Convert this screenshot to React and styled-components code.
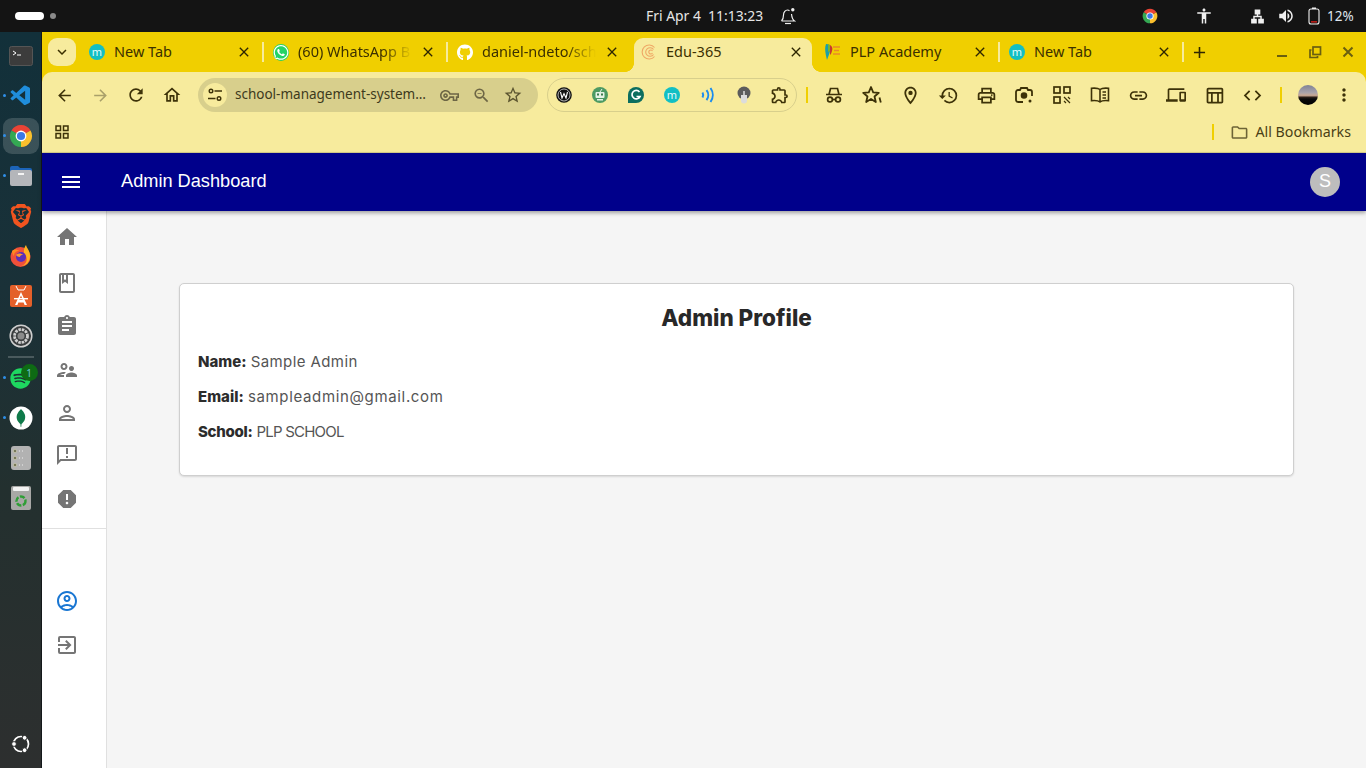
import React from 'react';
import styled, { createGlobalStyle } from 'styled-components';
import {
  MdHome, MdOutlineBook, MdAssignment, MdOutlineSupervisorAccount, MdOutlinePerson, MdOutlineAnnouncement, MdReport,
  MdOutlineAccountCircle, MdOutlineExitToApp, MdMenu, MdArrowBack, MdArrowForward, MdRefresh, MdOutlineHome, MdOutlineVpnKey,
  MdZoomOut, MdStarBorder, MdOutlineExtension, MdOutlineLocationOn, MdHistory, MdOutlinePrint,
  MdLink, MdOutlineDevices, MdOutlineTableChart, MdCode, MdMoreVert, MdAccessibility, MdLan, MdVolumeUp, MdClose, MdAdd,
  MdKeyboardArrowDown, MdOutlineGridView, MdOutlineFolder,
} from 'react-icons/md';
import { FaWhatsapp, FaGithub, FaSpotify } from 'react-icons/fa';
import { VscVscode } from 'react-icons/vsc';
import { SiBrave } from 'react-icons/si';

const Global = createGlobalStyle`
  html, body { margin: 0; padding: 0; overflow: hidden; background: #f5f5f5; }
  * { box-sizing: border-box; }
`;

const Screen = styled.div`
  width: 1366px; height: 768px; display: flex; flex-direction: column;
  font-family: "Noto Sans", sans-serif; overflow: hidden;
`;

/* ---- system top bar ---- */
const TopBar = styled.header`
  height: 32px; flex: none; background: #141414; color: #e6e6e6; display: flex; align-items: center; font-size: 14px;
`;
const Pill = styled.span`
  width: 29px; height: 8px; border-radius: 4px; background: #fff; margin-left: 15px;
`;
const Dot = styled.span`
  width: 6px; height: 6px; border-radius: 50%; background: #8a8a8a; margin-left: 6px;
`;
const Clock = styled.span`
  margin: -2px 0 0 590px; width: 122px; white-space: pre; font-size: 13.9px;
`;
const TrayItem = styled.span`
  display: flex; align-items: center; justify-content: center; flex: none; color: #f0f0f0;
  margin-left: ${p => p.$ml}px;
  width: ${p => p.$w || 20}px;
`;
const Percent = styled.span`
  margin: -1px 0 0 3px; flex: none; font-size: 13.5px; color: #dfe6ee;
`;

/* ---- body ---- */
const Desktop = styled.div`
  flex: 1; display: flex; min-height: 0;
`;
const Dock = styled.nav`
  width: 42px; flex: none; display: flex; flex-direction: column; align-items: center; padding: 4px 0;
  background: linear-gradient(180deg, #12303a 0%, #1a3138 35%, #23302f 62%, #2d2f2f 100%);
  border-right: 1px solid #14181a;
`;
const DockItem = styled.div`
  position: relative; width: 36px; height: 40px; flex: none; display: flex; align-items: center; justify-content: center;
  ${p => p.$active && `
    &::before { content: ''; position: absolute; inset: 2px 0; background: rgba(255,255,255,.16); border-radius: 9px; }
  `}
  ${p => p.$running && `
    &::after { content: ''; position: absolute; left: 0; top: 18px; width: 3px; height: 3px; border-radius: 50%; background: #2f8fe8; }
  `}
  & > svg { position: relative; }
`;
const DockSep = styled.div`
  width: 26px; height: 2px; flex: none; background: rgba(255,255,255,.2);
`;
const DockBottom = styled(DockItem)`
  margin-top: auto;
`;
const DockBadge = styled.span`
  position: absolute; top: 6px; left: 18px; width: 17px; height: 17px; border-radius: 50%; background: #0e6b14;
  color: #6fc4d8; font-size: 10px; display: flex; align-items: center; justify-content: center;
`;

const Window = styled.div`
  flex: 1; min-width: 0; display: flex; flex-direction: column; background: #f0cf00;
`;

/* ---- tabs ---- */
const TabStrip = styled.div`
  height: 40px; flex: none; display: flex; align-items: flex-end; padding-left: 6px; color: #3b3000;
`;
const TabMenu = styled.button`
  width: 28px; height: 28px; margin: 0 3px 6px 0; border: 0; padding: 0; border-radius: 9px; background: #f7eb9d; color: #3b3000;
  display: flex; align-items: center; justify-content: center; flex: none;
`;
const Tab = styled.div`
  position: relative; width: 184px; height: 34px; flex: none; display: flex; align-items: center; padding: 0 0 6px 10px;
  ${p => p.$active ? `
    background: #f7eb9d; margin: 0 3px; width: 178px; padding-left: 7px; border-radius: 9px 9px 0 0;
    &::before, &::after { content: ''; position: absolute; bottom: 0; width: 9px; height: 9px; background: radial-gradient(circle at var(--c) 0, #f0cf00 8.6px, #f7eb9d 9.2px); }
    &::before { left: -9px; --c: 0; }
    &::after { right: -9px; --c: 100%; }
  ` : ''}
  ${p => p.$sep ? `
    &::after { content: ''; position: absolute; right: -1px; top: 4px; width: 2px; height: 20px; background: #f7eb9d; }
  ` : ''}
`;
const Favicon = styled.span`
  width: 16px; height: 16px; flex: none; display: flex; align-items: center; justify-content: center;
`;
const MercuryDot = styled.span`
  width: 16px; height: 16px; border-radius: 50%; background: #12bfc4; color: #e8fbfb; flex: none;
  font-size: 11px; line-height: 1; display: flex; align-items: center; justify-content: center; padding-bottom: 1px;
`;
const TabTitle = styled.span`
  margin: -2px 0 0 9px; width: 121px; font-size: 14.5px; white-space: nowrap; overflow: hidden; flex: none;
  ${p => p.$fade ? `-webkit-mask-image: linear-gradient(90deg, #000 84px, transparent 114px); mask-image: linear-gradient(90deg, #000 84px, transparent 114px);` : ''}
`;
const TabClose = styled.span`
  display: flex; flex: none; margin-left: 1px; color: #2e2600;
`;
const NewTabBtn = styled.span`
  width: 32px; height: 34px; padding-bottom: 6px; display: flex; align-items: center; justify-content: center; color: #2e2600; flex: none;
`;
const WinControls = styled.div`
  margin-left: auto; display: flex; height: 34px; padding: 0 2px 6px 0; align-items: center;
`;
const WinBtn = styled.span`
  width: 33px; display: flex; align-items: center; justify-content: center;
`;

/* ---- toolbar ---- */
const Toolbar = styled.div`
  height: 44px; flex: none; background: #f7eb9d; border-radius: 10px 10px 0 0; display: flex; align-items: center; padding: 2px 0 0 4px;
`;
const Tool = styled.span`
  width: ${p => p.$w || 36}px; flex: none; display: flex; align-items: center; justify-content: center;
  color: ${p => p.$tone || '#3d3208'};
`;
const Omnibox = styled.div`
  width: 340px; height: 34px; margin-left: 8px; flex: none; background: #d8cf8c; border-radius: 17px; display: flex; align-items: center; padding-left: 5px;
`;
const SiteInfo = styled.span`
  width: 24px; height: 24px; border-radius: 50%; background: #f7eb9d; flex: none; display: flex; align-items: center; justify-content: center;
`;
const Url = styled.span`
  margin: -2px 0 0 8px; width: 198px; flex: none; font-size: 13.5px; color: #3d3a1c; white-space: nowrap;
`;
const ExtPill = styled.div`
  width: 250px; height: 34px; margin-left: 9px; flex: none; border: 1px solid #d8cf8c; border-radius: 17px; display: flex; align-items: center; justify-content: center;
`;
const ToolSep = styled.span`
  width: 2px; height: 16px; flex: none; background: #f0cf00; margin: 0 ${p => p.$mr}px 0 ${p => p.$ml}px;
`;
const Avatar = styled.span`
  width: 20px; height: 20px; margin-left: 16px; border-radius: 50%; flex: none;
  background: linear-gradient(180deg, #7f8296 0%, #a9a3aa 38%, #c9a894 52%, #2a1e18 62%, #0a0a0a 70%, #000 100%);
`;
const MoreSlot = styled(Tool)`
  margin-left: 14px;
`;
const Bookmarks = styled.div`
  height: 37px; flex: none; background: #f7eb9d; border-bottom: 1px solid #d8cf8c; display: flex; align-items: center; padding: 0 0 4px 11px; color: #3d3208;
`;
const BookmarkEnd = styled.div`
  margin-left: auto; display: flex; align-items: center; padding-right: 15px; font-size: 14.2px; color: #4a4015;
`;
const BookSep = styled.span`
  width: 2px; height: 16px; background: #f0cf00; margin-right: 16px;
`;
const FolderIcon = styled.span`
  display: flex; color: #6d6436; margin-right: 7px;
`;
const BookLabel = styled.span`
  margin-top: -2px;
`;

/* ---- web page ---- */
const AppBar = styled.header`
  height: 58px; flex: none; background: #00008b; color: #fff; display: flex; align-items: center; padding: 0 26px 1px 17px;
  box-shadow: 0 2px 4px rgba(0,0,0,.35); position: relative; z-index: 1;
`;
const MenuBtn = styled.span`
  display: flex; width: 24px;
`;
const AppTitle = styled.h1`
  margin: 0 0 0 38px; font: 400 18.2px "Liberation Sans", Arial, sans-serif;
`;
const UserBadge = styled.span`
  margin-left: auto; width: 30px; height: 30px; border-radius: 50%; background: #bdbdbd; color: #fff; font: 400 18px "Liberation Sans", Arial, sans-serif;
  display: flex; align-items: center; justify-content: center;
`;
const PageBody = styled.div`
  flex: 1; min-height: 0; display: flex; background: #f5f5f5;
`;
const Sidebar = styled.aside`
  width: 65px; flex: none; background: #fff; border-right: 1px solid #e0e0e0; color: #757575; padding-top: 6px;
`;
const SideItem = styled.div`
  height: 40px; margin-top: ${p => p.$gap || 0}px; display: flex; align-items: center; padding-left: 13px;
  color: ${p => p.$active ? '#1976d2' : 'inherit'};
`;
const SideDivider = styled.hr`
  margin: 9px 0 52px; border: 0; border-top: 1px solid #e0e0e0;
`;
const Main = styled.main`
  flex: 1; min-width: 0; padding: 72px 0 0 72px;
`;
const Card = styled.section`
  width: 1115px; height: 193px; background: #fff; border: 1px solid #cfcfcf; border-radius: 5px;
  box-shadow: 0 1px 2px rgba(0,0,0,.12); padding: 17px 18px 0;
`;
const CardTitle = styled.h2`
  margin: 0 0 17px; font: 800 22.5px/34px Inter, sans-serif; color: #282828; text-align: center;
`;
const Field = styled.p`
  margin: 0 0 15px; height: 20px; font: 400 15px/20px Inter, sans-serif; color: #555;
`;
const Label = styled.strong`
  color: #2c2c2c; font-weight: 800; letter-spacing: ${p => p.$ls || 0}px;
`;
const Value = styled.span`
  letter-spacing: ${p => p.$ls || 0}px;
`;

/* ---- drawings ---- */
const ChromeLogo = ({ s = 24 }) => (
  <svg width={s} height={s} viewBox="0 0 24 24">
    <path d="M12 12 2.47 6.5A11 11 0 0 1 21.53 6.5Z" fill="#ea4335" />
    <path d="M12 12 21.53 6.5A11 11 0 0 1 12 23Z" fill="#fbc02d" />
    <path d="M12 12V23A11 11 0 0 1 2.47 6.5Z" fill="#34a853" />
    <circle cx="12" cy="12" r="5.4" fill="#fff" />
    <circle cx="12" cy="12" r="4.1" fill="#3b78e7" />
  </svg>
);
const Terminal = () => (
  <svg width="24" height="20" viewBox="0 0 24 20">
    <rect x=".5" y=".5" width="23" height="19" rx="2" fill="#3c3c3c" stroke="#555" />
    <path d="M4 5l3 2-3 2M8 9h4" stroke="#fff" fill="none" />
  </svg>
);
const FilesIcon = () => (
  <svg width="24" height="22" viewBox="0 0 24 22">
    <path d="M1 3a2 2 0 0 1 2-2h6l2 2h10a2 2 0 0 1 2 2v3H1Z" fill="#1c64b8" />
    <rect x="1" y="5" width="22" height="16" rx="2" fill="#b4b6ba" />
    <rect x="9" y="8" width="6" height="2" fill="#f4f4f4" />
  </svg>
);
const Firefox = () => (
  <svg width="24" height="24" viewBox="0 0 24 24">
    <circle cx="11.5" cy="13" r="10" fill="#f0503a" />
    <path d="M21 12c0 6-4 10-9 10 7-2 7-9 3-13-.5-3 .5-6 2-8 .5 3 4 5 4 11Z" fill="#ffb01f" />
    <path d="M3 7c2-2 5-2 7 0-3 0-5 2-5 5-1-1-2-3-2-5Z" fill="#ff8a1f" />
    <circle cx="12" cy="13" r="5" fill="#5b2fb8" />
    <path d="M7 11c2-2 5-2 7 0-2 0-3 .5-3 2-2 0-3-1-4-2Z" fill="#ff9a2b" />
  </svg>
);
const AppStore = () => (
  <svg width="22" height="22" viewBox="0 0 22 22">
    <rect width="22" height="22" rx="2" fill="#e4602a" />
    <path d="M6 1l2 4h6l2-4" stroke="#fff" fill="none" />
    <path d="M11 7 5 20h2.4l1-2.6h5.2l1 2.6H17ZM9.2 15 11 10.5 12.8 15Z" fill="#fff" />
    <rect x="4" y="13" width="14" height="1.4" fill="#fff" />
  </svg>
);
const Settings = () => (
  <svg width="24" height="24" viewBox="0 0 24 24">
    <circle cx="12" cy="12" r="10.8" fill="#3a3d3e" stroke="#cfcfcf" strokeWidth="1.5" />
    <circle cx="12" cy="12" r="6.5" fill="none" stroke="#cfcfcf" strokeWidth="2.8" strokeDasharray="2.5 .9" />
    <circle cx="12" cy="12" r="3.5" fill="#8b8b8b" />
  </svg>
);
const ServerIcon = () => (
  <svg width="20" height="24" viewBox="0 0 20 24">
    <rect width="20" height="24" rx="3" fill="#b2b2b2" />
    {[5, 12, 19].map(y => (
      <g key={y}>
        <circle cx="4" cy={y} r="1.7" fill="#77785a" stroke="#e0e0c0" strokeWidth=".5" />
        <path d={`M8 ${y}h1M11 ${y}h1`} stroke="#eee" />
      </g>
    ))}
  </svg>
);
const TrashIcon = () => (
  <svg width="20" height="24" viewBox="0 0 20 24">
    <rect width="20" height="24" rx="2" fill="#a8a8a6" />
    <rect x="2" y="1" width="16" height="4" rx="1" fill="#f2f2f2" />
    <circle cx="10" cy="15" r="4.5" fill="none" stroke="#2f9e36" strokeWidth="2.4" strokeDasharray="5 1.5" />
  </svg>
);
const UbuntuLogo = () => (
  <svg width="20" height="20" viewBox="0 0 20 20">
    <circle cx="10" cy="10" r="7.5" fill="none" stroke="#fff" strokeWidth="1.7" />
    <circle cx="3" cy="10" r="2.4" fill="#fff" stroke="#2d2f2f" />
    <circle cx="13.6" cy="3.8" r="2.4" fill="#fff" stroke="#2d2f2f" />
    <circle cx="13.6" cy="16.2" r="2.4" fill="#fff" stroke="#2d2f2f" />
  </svg>
);
const MongoTile = () => (
  <svg width="24" height="24" viewBox="0 0 24 24">
    <circle cx="12" cy="12" r="11.5" fill="#fff" />
    <path d="M12 3c3 3 5 6 4 10-.6 2.5-2.5 4-3.5 5l-.3 3h-.5l-.3-3c-1-1-3-2.5-3.500-5C7 9 9 6 12 3Z" fill="#0f7a4a" />
  </svg>
);
const EduFav = () => (
  <svg width="16" height="16" viewBox="0 0 16 16" fill="none" stroke="#efa765" strokeWidth="1.1">
    <path d="M13.5 3.5a7 7 0 1 0 0 9" />
    <path d="M12.5 5.5a4.3 4.3 0 1 0 0 5" />
    <path d="M11.5 7a2 2 0 1 0 0 2" />
  </svg>
);
const PlpFav = () => (
  <svg width="16" height="18" viewBox="0 0 16 18">
    <path d="M1 1c4 0 5 3 4 7-.5 3-2 6-3 9-1-5-3-11-1-16Z" fill="#1aa0a8" />
    <path d="M3 1c3 0 3 4 2 7L3 9Z" fill="#7ab32e" />
    <path d="M5 2c2 1 3 3 2 6-.5 2-1 3-2 4Z" fill="#c8382f" />
    <path d="M8 4h7M9 7.5h5M8 11h7" stroke="#e98a26" strokeWidth="1.5" />
  </svg>
);
const WExt = () => (
  <svg width="16" height="16" viewBox="0 0 16 16">
    <circle cx="8" cy="8" r="7.8" fill="#111" />
    <circle cx="8" cy="8" r="6" fill="none" stroke="#ddd" strokeWidth=".8" />
    <path d="M4.5 5l1.5 6 2-4.5L10 11l1.5-6" fill="none" stroke="#fff" strokeWidth="1.1" />
  </svg>
);
const RobotExt = () => (
  <svg width="16" height="16" viewBox="0 0 16 16">
    <circle cx="8" cy="8" r="8" fill="#4d9a63" />
    <rect x="3.5" y="5" width="9" height="6" rx="1" fill="#e6f2e6" />
    <rect x="5" y="6.5" width="2" height="2" fill="#3a7a4e" />
    <rect x="9" y="6.5" width="2" height="2" fill="#3a7a4e" />
    <path d="M8 5l2-3" stroke="#e6f2e6" />
    <rect x="5" y="12" width="6" height="1.5" fill="#e6f2e6" />
  </svg>
);
const GrammarlyExt = () => (
  <svg width="16" height="16" viewBox="0 0 16 16">
    <path d="M8 0a8 8 0 1 1 0 16H0V8a8 8 0 0 1 8-8Z" fill="#0c6e5f" />
    <path d="M11.5 5A4.2 4.2 0 1 0 12 9.5H8.5" fill="none" stroke="#fff" strokeWidth="1.7" />
  </svg>
);
const WavesExt = () => (
  <svg width="16" height="16" viewBox="0 0 16 16" fill="none" stroke="#1a8cf0" strokeWidth="2">
    <path d="M2.5 5.5a5 5 0 0 1 0 5M6.5 3a8 8 0 0 1 0 10M10.5 1a12 12 0 0 1 0 14" />
  </svg>
);
const BulbExt = () => (
  <svg width="16" height="18" viewBox="0 0 16 18">
    <circle cx="8" cy="7" r="6.5" fill="#5c5c5c" />
    <path d="M5 9h6v5.5a3 3 0 0 1-6 0Z" fill="#dcdcdc" />
    <path d="M8 5v6" stroke="#dcdcdc" strokeWidth="1.5" />
  </svg>
);
const SiteTune = () => (
  <svg width="16" height="16" viewBox="0 0 16 16" fill="none" stroke="#3d3208" strokeWidth="1.4">
    <circle cx="4" cy="4" r="1.8" />
    <path d="M7.5 4H15M1 11.5h7.5" />
    <circle cx="12" cy="11.5" r="1.8" />
  </svg>
);
const SpyTool = () => (
  <svg width="20" height="20" viewBox="0 0 20 20" fill="none" stroke="#3d3208" strokeWidth="1.7">
    <path d="M2 9.500h16M5 9.500 6.500 3.500h7L15 9.500" />
    <circle cx="6" cy="14.500" r="2.400" />
    <circle cx="14" cy="14.500" r="2.400" />
    <path d="M8.400 14.500h3.200" />
  </svg>
);
const SparkStar = () => (
  <svg width="22" height="22" viewBox="0 0 22 22" fill="none" stroke="#3d3208" strokeWidth="1.8" strokeLinejoin="round">
    <path d="M10 3l2.200 5.300 5.600.5-4.300 3.700 1.300 5.500L10 15l-4.800 3 1.300-5.500L2.200 8.800l5.600-.5Z" />
    <path d="M18.500 13.500l1.300 5" />
  </svg>
);
const LensTool = () => (
  <svg width="20" height="20" viewBox="0 0 20 20" fill="none" stroke="#3d3208" strokeWidth="1.8">
    <path d="M9 17H4a2 2 0 0 1-2-2V7a2 2 0 0 1 2-2h2l1-2h6l1 2h2a2 2 0 0 1 2 2v4" />
    <circle cx="10" cy="10.500" r="2.400" fill="#3d3208" />
    <circle cx="16" cy="16" r="1.500" fill="#3d3208" stroke="none" />
  </svg>
);
const QrTool = () => (
  <svg width="18" height="18" viewBox="0 0 18 18" fill="none" stroke="#3d3208" strokeWidth="1.7">
    <rect x="1" y="1" width="6" height="6" />
    <rect x="11" y="1" width="6" height="6" />
    <rect x="1" y="11" width="6" height="6" />
    <path d="M11 11l2 2m2-2 2 2m-6 2 2 2m2-2 2 2m-4-4 2 2" strokeWidth="1.200" />
  </svg>
);
const BookTool = () => (
  <svg width="20" height="20" viewBox="0 0 20 20" fill="none" stroke="#3d3208" strokeWidth="1.6">
    <path d="M10 4.500C8.500 3.300 5 3 1.500 3.300v12.400C5 15.400 8.500 15.700 10 17c1.500-1.300 5-1.600 8.500-1.300V3.300C15 3 11.500 3.300 10 4.500ZM10 4.500V17M12.500 7h3.500M12.500 10h3.500M12.500 13h3.500" />
  </svg>
);
const BellDot = () => (
  <svg width="16" height="18" viewBox="0 0 16 18" fill="none" stroke="#f0f0f0" strokeWidth="1.2">
    <path d="M1.500 14c1.500-1.500 2-3 2-6s2-5 4-5c.8 0 1.500.3 2 .7M11.500 7c.3 3 .7 5.500 3 7H1.500" />
    <path d="M5 16.500h6" />
    <circle cx="12.800" cy="2.800" r="1.700" fill="#f0f0f0" stroke="none" />
  </svg>
);
const Battery = () => (
  <svg width="12" height="18" viewBox="0 0 12 18" fill="none">
    <rect x="1" y="2" width="10" height="15" rx="2" stroke="#f0f0f0" strokeWidth="1.1" />
    <rect x="4" y=".5" width="4" height="1.5" fill="#f0f0f0" />
    <rect x="3" y="14.200" width="6" height="1.3" fill="#e0201a" />
  </svg>
);
const WinMin = () => (
  <svg width="14" height="14" viewBox="0 0 14 14"><rect x="2" y="10" width="10" height="2" fill="#6a5f10" /></svg>
);
const WinRestore = () => (
  <svg width="14" height="14" viewBox="0 0 14 14" fill="none" stroke="#6a5f10" strokeWidth="1.7">
    <rect x="5" y="2" width="7.500" height="7.500" />
    <path d="M3.500 5H2v7.500h7.500V11" />
  </svg>
);
const WinClose = () => (
  <svg width="14" height="14" viewBox="0 0 14 14" fill="none" stroke="#6a5f10" strokeWidth="2">
    <path d="M2.500 2.500l9 9M11.500 2.500l-9 9" />
  </svg>
);

const tabClose = <TabClose><MdClose size={16} /></TabClose>;

export default function App() {
  return (
    <Screen>
      <Global />
      <TopBar>
        <Pill />
        <Dot />
        <Clock>Fri Apr 4  11:13:23</Clock>
        <TrayItem $ml={10}><BellDot /></TrayItem>
        <TrayItem $ml={342}><ChromeLogo s={16} /></TrayItem>
        <TrayItem $ml={34}><MdAccessibility size={18} /></TrayItem>
        <TrayItem $ml={33}><MdLan size={17} /></TrayItem>
        <TrayItem $ml={9}><MdVolumeUp size={18} /></TrayItem>
        <TrayItem $ml={8}><Battery /></TrayItem>
        <Percent>12%</Percent>
      </TopBar>
      <Desktop>
        <Dock>
          <DockItem><Terminal /></DockItem>
          <DockItem $running><VscVscode size={24} color="#1f8ddb" /></DockItem>
          <DockItem $active $running><ChromeLogo /></DockItem>
          <DockItem $running><FilesIcon /></DockItem>
          <DockItem><SiBrave size={24} color="#f1541f" /></DockItem>
          <DockItem><Firefox /></DockItem>
          <DockItem><AppStore /></DockItem>
          <DockItem><Settings /></DockItem>
          <DockSep />
          <DockItem $running><FaSpotify size={21} color="#1ed760" /><DockBadge>1</DockBadge></DockItem>
          <DockItem $running><MongoTile /></DockItem>
          <DockItem><ServerIcon /></DockItem>
          <DockItem><TrashIcon /></DockItem>
          <DockBottom><UbuntuLogo /></DockBottom>
        </Dock>
        <Window>
          <TabStrip>
            <TabMenu><MdKeyboardArrowDown size={18} /></TabMenu>
            <Tab $sep>
              <Favicon><MercuryDot>m</MercuryDot></Favicon>
              <TabTitle>New Tab</TabTitle>
              {tabClose}
            </Tab>
            <Tab $sep>
              <Favicon><FaWhatsapp size={17} color="#fff" style={{ background: '#25d366', borderRadius: '50%' }} /></Favicon>
              <TabTitle $fade>(60) WhatsApp B</TabTitle>
              {tabClose}
            </Tab>
            <Tab>
              <Favicon><FaGithub size={17} color="#fff" /></Favicon>
              <TabTitle $fade>daniel-ndeto/sch</TabTitle>
              {tabClose}
            </Tab>
            <Tab $active>
              <Favicon><EduFav /></Favicon>
              <TabTitle>Edu-365</TabTitle>
              {tabClose}
            </Tab>
            <Tab $sep>
              <Favicon><PlpFav /></Favicon>
              <TabTitle>PLP Academy</TabTitle>
              {tabClose}
            </Tab>
            <Tab $sep>
              <Favicon><MercuryDot>m</MercuryDot></Favicon>
              <TabTitle>New Tab</TabTitle>
              {tabClose}
            </Tab>
            <NewTabBtn><MdAdd size={19} /></NewTabBtn>
            <WinControls>
              <WinBtn><WinMin /></WinBtn>
              <WinBtn><WinRestore /></WinBtn>
              <WinBtn><WinClose /></WinBtn>
            </WinControls>
          </TabStrip>
          <Toolbar>
            <Tool><MdArrowBack size={19} /></Tool>
            <Tool $tone="#a9a06a"><MdArrowForward size={19} /></Tool>
            <Tool><MdRefresh size={20} /></Tool>
            <Tool><MdOutlineHome size={20} /></Tool>
            <Omnibox>
              <SiteInfo><SiteTune /></SiteInfo>
              <Url>school-management-system…</Url>
              <Tool $w={32} $tone="#6d6645"><MdOutlineVpnKey size={19} /></Tool>
              <Tool $w={32} $tone="#6d6645"><MdZoomOut size={19} /></Tool>
              <Tool $w={32} $tone="#5c5530"><MdStarBorder size={20} /></Tool>
            </Omnibox>
            <ExtPill>
              <Tool><WExt /></Tool>
              <Tool><RobotExt /></Tool>
              <Tool><GrammarlyExt /></Tool>
              <Tool><MercuryDot>m</MercuryDot></Tool>
              <Tool><WavesExt /></Tool>
              <Tool><BulbExt /></Tool>
              <Tool><MdOutlineExtension size={20} /></Tool>
            </ExtPill>
            <ToolSep $ml={9} $mr={7} />
            <Tool $w={38}><SpyTool /></Tool>
            <Tool $w={38}><SparkStar /></Tool>
            <Tool $w={38}><MdOutlineLocationOn size={21} /></Tool>
            <Tool $w={38}><MdHistory size={21} /></Tool>
            <Tool $w={38}><MdOutlinePrint size={21} /></Tool>
            <Tool $w={38}><LensTool /></Tool>
            <Tool $w={38}><QrTool /></Tool>
            <Tool $w={38}><BookTool /></Tool>
            <Tool $w={38}><MdLink size={21} /></Tool>
            <Tool $w={38}><MdOutlineDevices size={20} /></Tool>
            <Tool $w={38}><MdOutlineTableChart size={21} /></Tool>
            <Tool $w={38}><MdCode size={21} /></Tool>
            <ToolSep $ml={9} $mr={0} />
            <Avatar />
            <MoreSlot $w={24}><MdMoreVert size={20} /></MoreSlot>
          </Toolbar>
          <Bookmarks>
            <MdOutlineGridView size={18} />
            <BookmarkEnd>
              <BookSep />
              <FolderIcon><MdOutlineFolder size={19} /></FolderIcon>
              <BookLabel>All Bookmarks</BookLabel>
            </BookmarkEnd>
          </Bookmarks>
          <AppBar>
            <MenuBtn><MdMenu size={24} /></MenuBtn>
            <AppTitle>Admin Dashboard</AppTitle>
            <UserBadge>S</UserBadge>
          </AppBar>
          <PageBody>
            <Sidebar>
              <SideItem><MdHome size={24} /></SideItem>
              <SideItem $gap={6}><MdOutlineBook size={24} /></SideItem>
              <SideItem $gap={3}><MdAssignment size={24} /></SideItem>
              <SideItem $gap={4}><MdOutlineSupervisorAccount size={24} /></SideItem>
              <SideItem $gap={3}><MdOutlinePerson size={24} /></SideItem>
              <SideItem $gap={2}><MdOutlineAnnouncement size={24} /></SideItem>
              <SideItem $gap={4}><MdReport size={24} /></SideItem>
              <SideDivider />
              <SideItem $active><MdOutlineAccountCircle size={24} /></SideItem>
              <SideItem $gap={4}><MdOutlineExitToApp size={24} /></SideItem>
            </Sidebar>
            <Main>
              <Card>
                <CardTitle>Admin Profile</CardTitle>
                <Field><Label>Name:</Label> <Value $ls={0.4}>Sample Admin</Value></Field>
                <Field><Label>Email:</Label> <Value $ls={0.65}>sampleadmin@gmail.com</Value></Field>
                <Field><Label $ls={-0.3}>School:</Label> <Value $ls={-0.8}>PLP SCHOOL</Value></Field>
              </Card>
            </Main>
          </PageBody>
        </Window>
      </Desktop>
    </Screen>
  );
}
